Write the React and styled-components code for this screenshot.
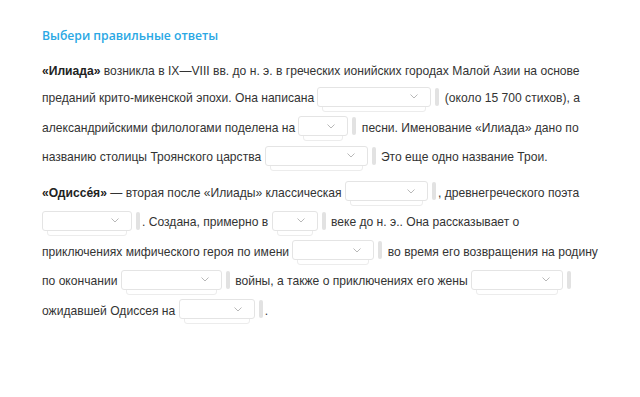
import React from 'react';
import styled, { createGlobalStyle } from 'styled-components';

const GlobalStyle = createGlobalStyle`
  html, body {
    margin: 0;
    padding: 0;
    background: #ffffff;
  }
`;

const Page = styled.div`
  width: 640px;
  height: 397px;
  box-sizing: border-box;
  padding: 26px 20px 0 42px;
  font-family: 'Liberation Sans', Arial, sans-serif;
  color: #333333;
`;

const Title = styled.h2`
  margin: 0 0 12px;
  font-family: 'Open Sans', sans-serif;
  font-size: 12.2px;
  font-weight: 600;
  line-height: 20px;
  color: #2aa8e4;
`;

const Paragraph = styled.p`
  margin: 0 0 6px;
  font-size: 12.1px;
  line-height: 26px;
`;

const Bold = styled.b`
  font-weight: 700;
  color: #222222;
`;

const SelectWrap = styled.span`
  position: relative;
  display: inline-block;
  vertical-align: middle;
  width: ${(p) => p.w}px;
  height: 20px;
  margin: 2.5px 0 7px;
`;

const SelectBox = styled.span`
  position: relative;
  z-index: 1;
  display: flex;
  align-items: center;
  justify-content: flex-end;
  box-sizing: border-box;
  height: 20px;
  padding-right: 12px;
  background: #ffffff;
  border: 1px solid #e4e4e4;
  border-radius: 3px;
`;

const SelectShadow = styled.span`
  position: absolute;
  left: 5px;
  right: 5px;
  top: 4px;
  height: 19px;
  border: 1px solid #ececec;
  border-radius: 3px;
  background: #ffffff;
`;

const Bar = styled.span`
  display: inline-block;
  vertical-align: middle;
  width: 4px;
  height: 18px;
  margin: 2.5px 2px 7px 4px;
  background: #e2e2e2;
  border-radius: 2px;
`;

const Chevron = () => (
  <svg width="8" height="5" viewBox="0 0 8 5">
    <path d="M0.5 0.5 L4 4 L7.5 0.5" fill="none" stroke="#b8b8b8" strokeWidth="1" />
  </svg>
);

const Select = ({ w }) => (
  <>
    <SelectWrap w={w}>
      <SelectShadow />
      <SelectBox>
        <Chevron />
      </SelectBox>
    </SelectWrap>
    <Bar />
  </>
);

const App = () => (
  <Page>
    <GlobalStyle />
    <Title>Выбери правильные ответы</Title>
    <Paragraph>
      <Bold>«Илиада»</Bold> возникла в IX—VIII вв. до н. э. в греческих ионийских городах Малой Азии на основе
      <br />
      преданий крито-микенской эпохи. Она написана <Select w={114} /> (около 15 700 стихов), а
      <br />
      александрийскими филологами поделена на <Select w={50} /> песни. Именование «Илиада» дано по
      <br />
      названию столицы Троянского царства <Select w={103} /> Это еще одно название Трои.
    </Paragraph>
    <Paragraph>
      <Bold>«Одиссе́я»</Bold> — вторая после «Илиады» классическая <Select w={83} />, древнегреческого поэта
      <br />
      <Select w={90} />. Создана, примерно в <Select w={46} /> веке до н. э.. Она рассказывает о
      <br />
      приключениях мифического героя по имени <Select w={82} /> во время его возвращения на родину
      <br />
      по окончании <Select w={101} /> войны, а также о приключениях его жены <Select w={92} />
      <br />
      ожидавшей Одиссея на <Select w={76} />.
    </Paragraph>
  </Page>
);

export default App;
